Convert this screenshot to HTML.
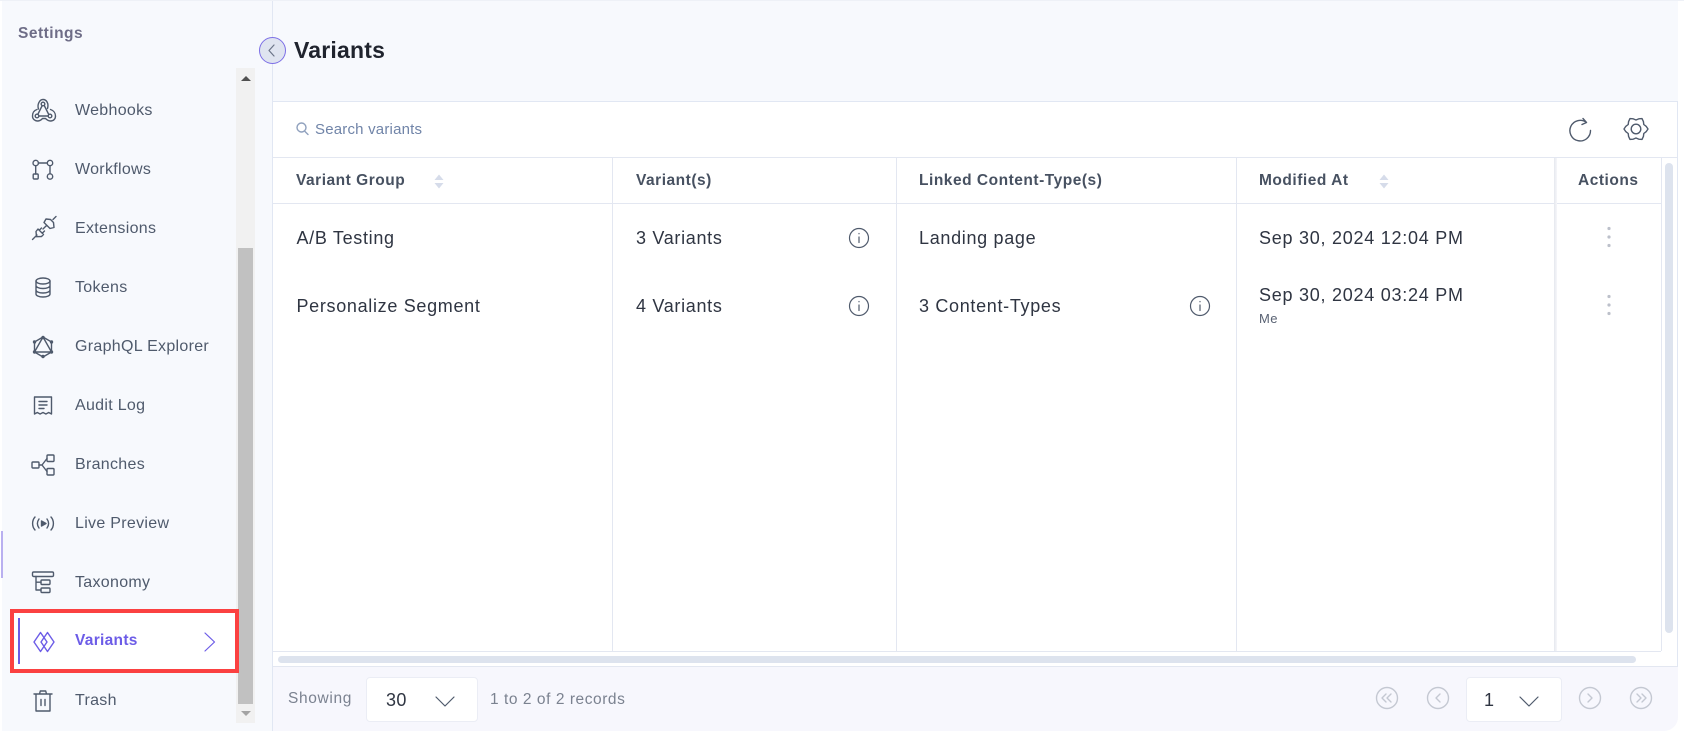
<!DOCTYPE html>
<html><head><meta charset="utf-8"><style>
*{box-sizing:border-box}
html,body{margin:0;padding:0;background:#fff}
#r{position:relative;width:1684px;height:738px;overflow:hidden;background:#fff;font-family:"Liberation Sans",sans-serif;filter:blur(.35px)}
#r div,#r svg{position:absolute}
.t{white-space:nowrap;line-height:20px;height:20px}
.n{left:75px;font-size:16px;letter-spacing:.3px;color:#4f5a6c}
.h{font-size:15.5px;font-weight:700;letter-spacing:.52px;color:#475161}
.c{font-size:18px;letter-spacing:.68px;color:#2f3542}
.l{background:#e3e7f1}
svg{fill:none;stroke:#4f5a6c;stroke-width:1.4;stroke-linecap:round;stroke-linejoin:round;overflow:visible}
</style></head><body><div id="r">
<div style="left:2px;top:1px;width:1676px;height:730px;background:#f7f9fd;border-bottom-right-radius:14px"></div>
<div style="left:272px;top:0;width:1px;height:731px;background:#e1e7f3"></div>
<div style="left:0;top:0;width:1684px;height:1px;background:#eef1f7"></div>
<div style="left:273px;top:667px;width:1405px;height:64px;background:#f7f7fd;border-bottom-right-radius:14px"></div>
<div style="left:1px;top:531px;width:2px;height:47px;background:#b9b0f0"></div>

<div class="t" style="left:18px;top:24px;font-size:15.5px;font-weight:700;letter-spacing:.5px;color:#6e6d87">Settings</div>

<!-- scrollbar -->
<div style="left:236px;top:68px;width:19px;height:655px;background:#f1f1f1"></div>
<div style="left:238px;top:248px;width:15px;height:456px;background:#c1c1c1"></div>
<div style="left:241px;top:76px;width:0;height:0;border:5px solid transparent;border-top:0;border-bottom:5px solid #505050"></div>
<div style="left:241px;top:711px;width:0;height:0;border:5px solid transparent;border-bottom:0;border-top:5px solid #a3a3a3"></div>

<!-- active item -->
<div style="left:10px;top:609px;width:229px;height:64px;border:4px solid #fb4141;background:#fff"></div>
<div style="left:18px;top:618px;width:2px;height:46px;background:#6c5ce7"></div>

<div class="t n" style="top:101px">Webhooks</div>
<div class="t n" style="top:160px">Workflows</div>
<div class="t n" style="top:219px">Extensions</div>
<div class="t n" style="top:278px">Tokens</div>
<div class="t n" style="top:337px">GraphQL Explorer</div>
<div class="t n" style="top:396px">Audit Log</div>
<div class="t n" style="top:455px">Branches</div>
<div class="t n" style="top:514px">Live Preview</div>
<div class="t n" style="top:573px">Taxonomy</div>
<div class="t n" style="top:631px;color:#6c5ce7;font-weight:700;font-size:15.5px">Variants</div>
<div class="t n" style="top:691px">Trash</div>

<!-- webhooks -->
<svg style="left:31px;top:98px" width="26" height="26" viewBox="0 0 26 26"><circle cx="12" cy="6" r="1.8"/><circle cx="6" cy="18" r="1.8"/><circle cx="19" cy="18" r="1.8"/><path d="M8 18h9M11 8l-4 8M13.500 8l4 8M7.500 11C6 6.500 8.500 1.500 12 1.500s6 4 4.500 9M6 11.500C3 12.500 1.500 15 1.500 18c0 3.500 3 5 5 5 3 0 4-1.500 5-2.500h3c1 1 2.500 2.500 5 2.500 3 0 5-2 5-5 0-3-2-5.500-5-6.500"/></svg>
<!-- workflows -->
<svg style="left:31px;top:158px" width="24" height="24" viewBox="0 0 24 24"><circle cx="4.700" cy="5" r="2.700"/><circle cx="19" cy="5" r="2.700"/><rect x="2.200" y="16" width="5" height="5" rx="1"/><circle cx="19" cy="18.500" r="2.700"/><path d="M7.400 5h8.900M4.700 7.700V16M19 7.700v8.100"/></svg>
<!-- extensions -->
<svg style="left:31px;top:215px" width="26" height="26" viewBox="0 0 26 26"><path d="M1.500 24.500l4.500-4.500M7 14l5.500 5.500-2 2-5 .2-.5-5.200zM10.500 13l-2 2M13.500 16l-2 2M13 7.500l6 6 4-1-.5-5-3-3-4.500-.5zM22 4.500l3-3M12 14l3-3"/></svg>
<!-- tokens -->
<svg style="left:33px;top:277px" width="20" height="22" viewBox="0 0 20 22"><ellipse cx="10" cy="4" rx="7" ry="3"/><path d="M3 4v13c0 1.700 3 3 7 3s7-1.300 7-3V4M3 8.500c0 1.700 3 3 7 3s7-1.300 7-3M3 13c0 1.700 3 3 7 3s7-1.300 7-3"/></svg>
<!-- graphql -->
<svg style="left:31px;top:335px" width="24" height="24" viewBox="0 0 24 24"><path d="M12 2l8.500 5v10L12 22l-8.500-5V7zM12 2l8.500 15H3.500z"/><g fill="#4f5a6c"><circle cx="12" cy="2.500" r="1"/><circle cx="20.500" cy="7" r="1"/><circle cx="20.500" cy="17" r="1"/><circle cx="12" cy="21.500" r="1"/><circle cx="3.500" cy="17" r="1"/><circle cx="3.500" cy="7" r="1"/></g></svg>
<!-- audit -->
<svg style="left:33px;top:395px" width="20" height="22" viewBox="0 0 20 22"><path d="M1.500 19V2h17v17l-2.800-1.500-2.800 1.500-2.900-1.500-2.900 1.500-2.800-1.500zM6 6.500h8M6 10h8M6 13.500h5"/></svg>
<!-- branches -->
<svg style="left:31px;top:454px" width="25" height="22" viewBox="0 0 25 22"><rect x="1" y="8" width="7" height="6" rx="1"/><rect x="16" y="1" width="7" height="6.500" rx="1"/><rect x="16" y="14.500" width="7" height="6.500" rx="1"/><path d="M8 11h3l5-6.500M11 11l5 6.500"/></svg>
<!-- live -->
<svg style="left:31px;top:516px" width="24" height="15" viewBox="0 0 24 15"><path d="M4 1C.8 4.500.8 10.500 4 14M8 3c-2 2.800-2 6.200 0 9M20 1c3.200 3.500 3.200 9.500 0 13M16 3c2 2.800 2 6.200 0 9"/><path d="M10.500 5v5l4.500-2.500z" fill="#4f5a6c"/></svg>
<!-- taxonomy -->
<svg style="left:31px;top:571px" width="24" height="24" viewBox="0 0 24 24"><rect x="1.500" y="1" width="21" height="4.500" rx="1.200"/><rect x="10" y="9" width="9" height="4.500" rx="1"/><rect x="10" y="17" width="9" height="4.500" rx="1"/><path d="M5 5.500V19h5M5 11.200h5"/></svg>
<!-- variants -->
<svg style="left:32px;top:630px" width="24" height="24" viewBox="0 0 24 24"><path stroke="#6c5ce7" d="M8.500 2.500L2 12l6.500 9.500L15 12zM15.500 2.500L9 12l6.500 9.500L22 12z"/></svg>
<svg style="left:202px;top:631px" width="16" height="22" viewBox="0 0 16 22"><path stroke="#6c5ce7" stroke-width="1.200" d="M3 2l9.500 9-9.500 9"/></svg>
<!-- trash -->
<svg style="left:33px;top:689px" width="20" height="24" viewBox="0 0 20 24"><path d="M1 5h18M3 5v17h14V5M6.500 5l.8-3h5.400l.8 3M8 10.500v6M12 10.500v6"/></svg>

<!-- toggle -->
<div style="left:259px;top:37px;width:27px;height:27px;border-radius:50%;background:#dfe4f0;border:1.500px solid #7c6fe6"></div>
<svg style="left:265px;top:43px" width="14" height="15" viewBox="0 0 14 15"><path stroke="#6b7488" stroke-width="1.200" d="M9 2L4 7.500 9 13"/></svg>
<div class="t" style="left:294px;top:37px;height:26px;line-height:26px;font-size:23px;font-weight:700;letter-spacing:.2px;color:#20242e">Variants</div>

<!-- panel -->
<div style="left:273px;top:101px;width:1405px;height:566px;background:#fff;border-top:1px solid #e1e7f3;border-right:1px solid #e1e7f3"></div>
<div class="l" style="left:273px;top:157px;width:1405px;height:1px"></div>
<div class="l" style="left:273px;top:203px;width:1388px;height:1px"></div>
<div class="l" style="left:273px;top:651px;width:1388px;height:1px"></div>
<div class="l" style="left:273px;top:666px;width:1405px;height:1px"></div>
<div class="l" style="left:612px;top:158px;width:1px;height:493px"></div>
<div class="l" style="left:896px;top:158px;width:1px;height:493px"></div>
<div class="l" style="left:1236px;top:158px;width:1px;height:493px"></div>
<div style="left:1554px;top:158px;width:3px;height:493px;background:linear-gradient(90deg,#e6e8ee,#f6f7fa)"></div>
<div class="l" style="left:1661px;top:158px;width:1px;height:493px"></div>

<svg style="left:296px;top:122px" width="13" height="14" viewBox="0 0 13 14"><circle cx="5.500" cy="5.500" r="4.500" stroke="#8fa0bd"/><path d="M9 9.500l3 3" stroke="#8fa0bd"/></svg>
<div class="t" style="left:315px;top:120px;font-size:15px;letter-spacing:.2px;color:#7084a8">Search variants</div>

<svg style="left:1568px;top:117px" width="24" height="26" viewBox="0 0 24 26"><path d="M18.500 5.500A10.300 10.300 0 1 0 22.500 13.500M15 1.500l3.500 4-4.500 2"/></svg>
<svg style="left:1623px;top:116px" width="26" height="26" viewBox="0 0 26 26"><circle cx="13" cy="13" r="4.800"/><polygon points="25,13 23.140,10.280 20.790,8.500 20.420,5.580 19,2.610 15.720,2.860 13,4 10.280,2.860 7,2.610 5.580,5.580 5.210,8.500 2.860,10.280 1,13 2.860,15.720 5.210,17.500 5.580,20.420 7,23.390 10.280,23.140 13,22 15.720,23.140 19,23.390 20.420,20.420 20.790,17.500 23.140,15.720"/></svg>

<div class="t h" style="left:296px;top:171px">Variant Group</div>
<div class="t h" style="left:636px;top:171px">Variant(s)</div>
<div class="t h" style="left:919px;top:171px">Linked Content-Type(s)</div>
<div class="t h" style="left:1259px;top:171px">Modified At</div>
<div class="t h" style="left:1578px;top:171px">Actions</div>

<svg style="left:433px;top:173px" width="12" height="17" viewBox="0 0 12 17"><path d="M1.500 7L6 1.500 10.500 7zM1.500 10L6 15.500 10.500 10z" fill="#d6dcea" stroke="none"/></svg>
<svg style="left:1378px;top:173px" width="12" height="17" viewBox="0 0 12 17"><path d="M1.500 7L6 1.500 10.500 7zM1.500 10L6 15.500 10.500 10z" fill="#d6dcea" stroke="none"/></svg>

<div class="t c" style="left:296.500px;top:228px">A/B Testing</div>
<div class="t c" style="left:636px;top:228px">3 Variants</div>
<div class="t c" style="left:919px;top:228px">Landing page</div>
<div class="t c" style="left:1259px;top:228px;letter-spacing:.74px">Sep 30, 2024 12:04 PM</div>
<div class="t c" style="left:296.500px;top:296px">Personalize Segment</div>
<div class="t c" style="left:636px;top:296px">4 Variants</div>
<div class="t c" style="left:919px;top:296px">3 Content-Types</div>
<div class="t c" style="left:1259px;top:285px;letter-spacing:.74px">Sep 30, 2024 03:24 PM</div>
<div class="t" style="left:1259px;top:309px;font-size:13px;letter-spacing:.45px;color:#596273">Me</div>

<svg style="left:848px;top:227px" width="22" height="22" viewBox="0 0 22 22"><circle cx="11" cy="11" r="9.500" stroke-width="1.200"/><path d="M11 10v5.500M11 6.500v.3" stroke-width="1.200"/></svg>
<svg style="left:848px;top:295px" width="22" height="22" viewBox="0 0 22 22"><circle cx="11" cy="11" r="9.500" stroke-width="1.200"/><path d="M11 10v5.500M11 6.500v.3" stroke-width="1.200"/></svg>
<svg style="left:1189px;top:295px" width="22" height="22" viewBox="0 0 22 22"><circle cx="11" cy="11" r="9.500" stroke-width="1.200"/><path d="M11 10v5.500M11 6.500v.3" stroke-width="1.200"/></svg>

<svg style="left:1605.500px;top:225px" width="6" height="24" viewBox="0 0 6 24"><g fill="#bcc0ca" stroke="none"><circle cx="3" cy="3.500" r="1.600"/><circle cx="3" cy="12" r="1.600"/><circle cx="3" cy="20.500" r="1.600"/></g></svg>
<svg style="left:1605.500px;top:293px" width="6" height="24" viewBox="0 0 6 24"><g fill="#bcc0ca" stroke="none"><circle cx="3" cy="3.500" r="1.600"/><circle cx="3" cy="12" r="1.600"/><circle cx="3" cy="20.500" r="1.600"/></g></svg>

<!-- scrollbars -->
<div style="left:1665px;top:163px;width:8px;height:470px;border-radius:4px;background:#dde3ee"></div>
<div style="left:278px;top:656px;width:1358px;height:7px;border-radius:4px;background:#dde3ee"></div>

<!-- footer -->
<div class="t" style="left:288px;top:689px;font-size:15.500px;letter-spacing:.65px;color:#7b8290">Showing</div>
<div style="left:366px;top:677px;width:112px;height:45px;background:#fff;border:1px solid #ebedf5;border-radius:4px"></div>
<div class="t" style="left:386px;top:690px;font-size:18px;letter-spacing:.4px;color:#2f3542">30</div>
<svg style="left:434px;top:694px" width="22" height="14" viewBox="0 0 22 14"><path stroke-width="1.200" d="M2 3l9 9 9-9"/></svg>
<div class="t" style="left:490px;top:689.500px;font-size:15.500px;letter-spacing:.55px;color:#7b8290">1 to 2 of 2 records</div>

<svg style="left:1375px;top:686px" width="24" height="24" viewBox="0 0 24 24"><circle cx="12" cy="12" r="10.500" stroke="#c4c8d2"/><path d="M11 8l-4 4 4 4M16 8l-4 4 4 4" stroke="#c4c8d2"/></svg>
<svg style="left:1426px;top:686px" width="24" height="24" viewBox="0 0 24 24"><circle cx="12" cy="12" r="10.500" stroke="#c4c8d2"/><path d="M14 8l-4 4 4 4" stroke="#c4c8d2"/></svg>
<div style="left:1466px;top:677px;width:96px;height:45px;background:#fff;border:1px solid #ebedf5;border-radius:4px"></div>
<div class="t" style="left:1484px;top:690px;font-size:18px;color:#2f3542">1</div>
<svg style="left:1518px;top:694px" width="22" height="14" viewBox="0 0 22 14"><path stroke-width="1.200" d="M2 3l9 9 9-9"/></svg>
<svg style="left:1578px;top:686px" width="24" height="24" viewBox="0 0 24 24"><circle cx="12" cy="12" r="10.500" stroke="#c4c8d2"/><path d="M10 8l4 4-4 4" stroke="#c4c8d2"/></svg>
<svg style="left:1629px;top:686px" width="24" height="24" viewBox="0 0 24 24"><circle cx="12" cy="12" r="10.500" stroke="#c4c8d2"/><path d="M8 8l4 4-4 4M13 8l4 4-4 4" stroke="#c4c8d2"/></svg>
</div></body></html>
